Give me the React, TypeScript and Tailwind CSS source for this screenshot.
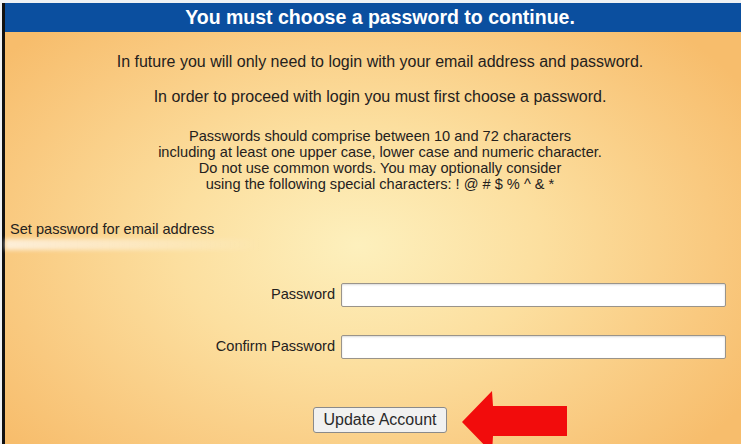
import React from "react";

const fieldRows = [
  { label: "Password", id: "pw" },
  { label: "Confirm Password", id: "pw2" },
];

const App = () => {
  return (
    <div className="w-[741px] h-[444px] overflow-hidden bg-[#eef1f4] pt-[3px] font-['Liberation_Sans',Arial,sans-serif] text-[#24211d]">
      <div className="relative ml-[2px] h-[441px] border-l-[3px] border-[#111] bg-[radial-gradient(ellipse_62%_68%_at_48%_55%,#fdf0bd_0%,#fcdf9f_40%,#f9c97f_78%,#f7bd6c_100%)]">
        <div className="h-[29px] bg-[#0b4f9f] pl-[14px] text-center text-[19.5px] font-bold leading-[29px] text-white">
          You must choose a password to continue.
        </div>

        <p className="mt-[21px] pl-[14px] text-center text-[16px] leading-[18px]">
          In future you will only need to login with your email address and password.
        </p>
        <p className="mt-[17px] pl-[14px] text-center text-[16px] leading-[18px]">
          In order to proceed with login you must first choose a password.
        </p>
        <p className="mt-[22px] pl-[14px] text-center text-[14.6px] leading-[16px]">
          Passwords should comprise between 10 and 72 characters
          <br />
          including at least one upper case, lower case and numeric character.
          <br />
          Do not use common words. You may optionally consider
          <br />
          using the following special characters: ! @ # $ % ^ &amp; *
        </p>

        <p className="mt-[29px] pl-[5px] text-[14.6px] leading-[17px]">Set password for email address</p>
        <div className="mt-[1px] h-[11px] w-[258px] bg-gradient-to-r from-white/70 via-white/40 to-transparent blur-[2px]" />

        <div className="mt-[33px] flex flex-col gap-[28px] pr-[15px]">
          {fieldRows.map((row) => (
            <div key={row.id} className="flex items-center justify-end gap-[6px]">
              <label htmlFor={row.id} className="text-[14.6px]">
                {row.label}
              </label>
              <input
                id={row.id}
                type="password"
                className="h-[24px] w-[385px] rounded-[2px] border border-[#9a948a] bg-white shadow-[inset_0_1px_2px_rgba(0,0,0,0.15)]"
              />
            </div>
          ))}
        </div>

        <div className="mt-[48px] flex justify-center pl-[14px]">
          <button className="h-[26px] w-[134px] rounded-[3px] border border-[#8a8a8a] bg-[#f1f1f0] text-[16px] text-[#2a2a2a]">
            Update Account
          </button>
        </div>

        <svg className="absolute left-[455px] top-[384px]" width="120" height="60" viewBox="0 0 120 60">
          <polygon points="2,35 32,4 33,19 107,19 107,49 33,49 32,66" fill="#f20c0c" />
        </svg>
      </div>
    </div>
  );
};

export default App;
